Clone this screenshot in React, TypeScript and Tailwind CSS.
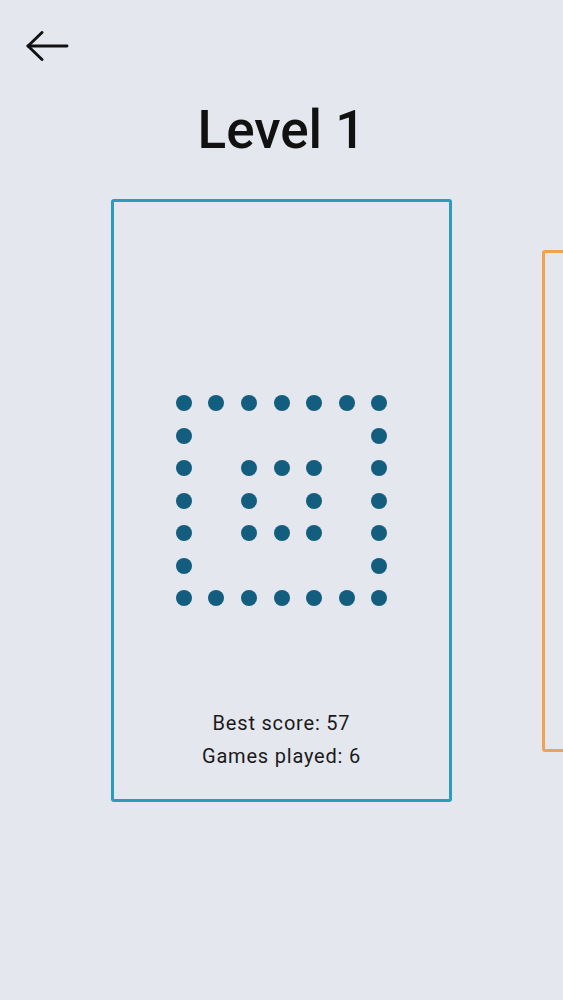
import React from 'react'

const pattern = [
  '1111111',
  '1000001',
  '1011101',
  '1010101',
  '1011101',
  '1000001',
  '1111111',
]

function BackArrow() {
  return (
    <svg width="44" height="32" viewBox="0 0 44 32" fill="none" stroke="#111111" strokeWidth="2.9" strokeLinecap="round" strokeLinejoin="round">
      <path d="M2 15H41" />
      <path d="M16 1.5L2 15L16 28.5" />
    </svg>
  )
}

function DotGrid() {
  return (
    <div className="grid grid-cols-[repeat(7,16px)] gap-x-[16.67px] gap-y-[16.5px] self-center">
      {pattern.flatMap((row, r) =>
        row.split('').map((cell, c) => (
          <span
            key={`${r}-${c}`}
            className={cell === '1' ? 'h-4 w-4 rounded-full bg-[#135e7e]' : 'h-4 w-4'}
          />
        ))
      )}
    </div>
  )
}

export default function App() {
  return (
    <div className="min-h-screen w-full overflow-hidden bg-[#e5e7ef] font-['Roboto','Liberation_Sans',Arial,sans-serif] text-[#111111]">
      <div className="pl-[26px] pt-[31px]">
        <BackArrow />
      </div>

      <h1 className="mt-[41px] text-center text-[53px] font-medium leading-none">Level 1</h1>

      <div className="mt-[42px] flex items-center gap-[90px] pl-[111px]">
        <div className="flex h-[603px] w-[341px] shrink-0 flex-col rounded-[3px] border-[3px] border-[#2b9cb9] pt-[193px] pb-[26px]">
          <DotGrid />
          <div className="mt-auto text-center text-[20px] leading-[33px] tracking-[0.8px] text-[#1a1a1a]">
            <p>Best score: 57</p>
            <p>Games played: 6</p>
          </div>
        </div>
        <div className="h-[502px] w-[284px] shrink-0 rounded-[3px] border-[3px] border-[#f2a052]" />
      </div>
    </div>
  )
}
